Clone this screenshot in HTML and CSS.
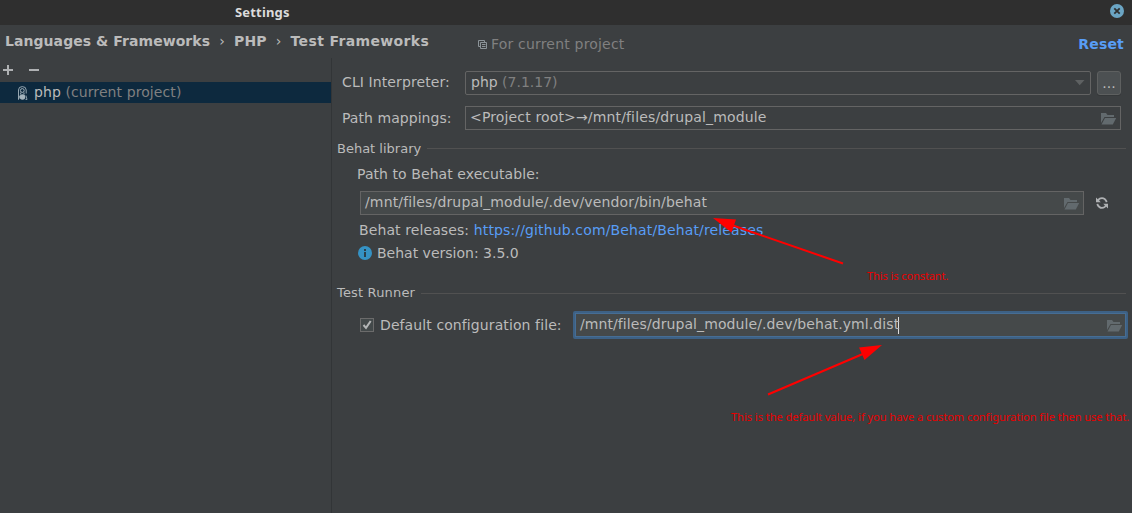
FILE: index.html
```html
<!DOCTYPE html>
<html lang="en">
<head>
<meta charset="utf-8">
<title>Settings</title>
<link rel="stylesheet" href="styles.css">
</head>
<body>
<svg class="defs" width="0" height="0">
  <symbol id="folder" viewBox="0 0 16 12">
    <path d="M0 10V0h5l1.500 2H13v2H3.500z"/>
    <path d="M4 5H15.200L11.800 11.500H.5z"/>
  </symbol>
</svg>
<div class="window">
  <header class="titlebar">
    <span class="title">Settings</span>
    <svg class="close" width="14" height="14" viewBox="0 0 14 14"><circle cx="7" cy="7" r="7" fill="#6ba5c4"/><path d="M4.300 4.300l5.400 5.400M9.700 4.300l-5.400 5.400" stroke="#2f2f2f" stroke-width="1.800"/></svg>
  </header>
  <div class="header">
    <nav class="crumbs"><span>Languages &amp; Frameworks</span><i>›</i><span>PHP</span><i>›</i><span class="current">Test Frameworks</span></nav>
    <div class="scope">
      <svg width="10" height="10" viewBox="0 0 10 10" fill="none" stroke="#8c9499"><path d="M2.500 6.500h-2v-6h6v2M2.500 2.500h6v6h-6zM4 4.500h3.500M4 6.500h3.500"/></svg>
      <span>For current project</span>
    </div>
    <a class="reset">Reset</a>
  </div>
  <div class="body">
    <aside class="sidebar">
      <div class="tools">
        <svg width="40" height="10" viewBox="0 0 40 10" fill="#afb1b3"><path d="M0 4h10v2H0zM4 0h2v10H4zM26 4h10v2H26z"/></svg>
      </div>
      <div class="item">
        <svg width="12" height="14" viewBox="0 0 12 14" fill="none" stroke="#a5b4bd"><path d="M1.500 13.500V4Q1.500.6 5.300.6T9.200 4V7.500" stroke-width=".9"/><circle cx="5.300" cy="4.500" r="1.900"/><path d="M3.700 6.500v2M7 6.500v2"/><path d="M1.500 13.500L3 9.500M9 9.500l1 4H8.500" stroke-width=".8"/><circle cx="5.500" cy="11" r="2.800" fill="#a5b4bd" stroke="none"/></svg>
        <span>php <em>(current project)</em></span>
      </div>
    </aside>
    <main class="panel">
      <div class="row cli">
        <label>CLI Interpreter:</label>
        <div class="field combo"><span>php <em>(7.1.17)</em></span><svg width="10" height="6" viewBox="0 0 10 6"><path d="M0 0h9.500L4.700 5.200z" fill="#5e6162"/></svg></div>
        <button class="more">...</button>
      </div>
      <div class="row mappings">
        <label>Path mappings:</label>
        <div class="field"><span>&lt;Project root&gt;→/mnt/files/drupal_module</span><svg class="folder" width="16" height="12"><use href="#folder"/></svg></div>
      </div>
      <div class="section first"><span>Behat library</span></div>
      <div class="path-label">Path to Behat executable:</div>
      <div class="row executable">
        <div class="field filled"><span>/mnt/files/drupal_module/.dev/vendor/bin/behat</span><svg class="folder" width="16" height="12"><use href="#folder"/></svg></div>
        <svg class="refresh" width="12" height="12" viewBox="0 0 12 12" fill="none" stroke="#afb1b3" stroke-width="1.800"><path d="M1.800 4Q3 1.100 6 1.100T10.800 5M10.200 8Q9 10.900 6 10.900T1.200 7"/><path d="M0 .5V5.200H4.800zM12 11.500V6.800H7.200z" fill="#afb1b3" stroke="none"/></svg>
      </div>
      <div class="releases">Behat releases: <a>https://github.com/Behat/Behat/releases</a></div>
      <div class="version">
        <svg width="14" height="14" viewBox="0 0 14 14"><circle cx="7" cy="7" r="7" fill="#3592c4"/><path d="M6 3h2v2H6zM6 6h2v5H6z" fill="#2b3f4a"/></svg>
        <span>Behat version: 3.5.0</span>
      </div>
      <div class="section second"><span>Test Runner</span></div>
      <div class="row config">
        <span class="check"><svg width="12" height="12" viewBox="0 0 12 12" fill="none" stroke="#b4b6b7" stroke-width="2"><path d="M2.500 6L5 8.800L9.700 2"/></svg></span>
        <label>Default configuration file:</label>
        <div class="field filled focused"><span>/mnt/files/drupal_module/.dev/behat.yml.dist</span><b class="caret"></b><svg class="folder" width="16" height="12"><use href="#folder"/></svg></div>
      </div>
    </main>
  </div>
  <svg class="arrows" width="1132" height="513" viewBox="0 0 1132 513" fill="#f00">
    <path d="M843 263.500L733 225.500" stroke="#f00" stroke-width="2"/><path d="M713 218L736 219.500L731.500 232.500z"/>
    <path d="M768 394.500L864 353.500" stroke="#f00" stroke-width="2"/><path d="M882 345L859 347.500L864.500 360z"/>
  </svg>
  <span class="note constant">This is constant.</span>
  <span class="note custom">This is the default value, if you have a custom configuration file then use that.</span>
</div>
</body>
</html>
```

FILE: styles.css
```css
* { box-sizing: border-box; }
body { margin: 0; background: #3c3f41; }
.window {
  position: relative;
  width: 1132px;
  height: 513px;
  overflow: hidden;
  display: flex;
  flex-direction: column;
  background: #3c3f41;
  color: #bbb;
  font: 14px/20px "DejaVu Sans", sans-serif;
  white-space: nowrap;
}
svg { display: block; flex: none; }
.defs { position: absolute; }
em { font-style: normal; color: #808080; }
.titlebar {
  height: 25px;
  flex: none;
  display: flex;
  justify-content: space-between;
  padding: 2px 8px 0 235px;
  background: #2f2f2f;
}
.title { font: bold 13px/20px "Noto Sans", sans-serif; letter-spacing: .18px; color: #dcdcdc; }
.close { margin-top: 2px; }
.header { height: 33px; flex: none; display: flex; padding: 6px 8px 0 5px; }
.crumbs { display: flex; width: 473px; font-weight: bold; letter-spacing: .06px; }
.crumbs i { font-style: normal; font-weight: normal; width: 24px; text-align: center; }
.crumbs .current { letter-spacing: .36px; }
.scope { display: flex; gap: 3px; padding-top: 3px; letter-spacing: .19px; color: #808080; }
.scope svg { margin-top: 6px; }
.reset { margin-left: auto; padding-top: 3px; font-weight: bold; letter-spacing: .2px; color: #589df6; }
.body { flex: 1; display: flex; }
.sidebar { width: 332px; border-right: 1px solid #323537; }
.tools { height: 24px; padding: 7px 0 0 3px; }
.item { height: 21px; display: flex; gap: 5px; padding-left: 17px; letter-spacing: .09px; background: #0d293e; }
.item svg { margin-top: 4px; }
.panel { flex: 1; display: flex; flex-direction: column; }
.row { display: flex; flex: none; }
.cli { margin: 13px 11px 0 10px; height: 24px; }
.mappings { margin: 11px 11px 0 10px; height: 24px; }
.cli label, .mappings label { width: 123px; letter-spacing: .1px; }
.cli label { padding-top: 1px; }
.mappings label { padding-top: 2px; letter-spacing: .05px; }
.field {
  flex: 1;
  height: 24px;
  display: flex;
  align-items: center;
  padding: 0 3px 0 4px;
  border: 1px solid #646464;
}
.field > span { position: relative; top: -1px; letter-spacing: .15px; }
.field > svg { margin-left: auto; }
.folder { fill: #626a6e; position: relative; top: 1px; }
.field.combo { padding: 0 5px; border-radius: 2px; }
.combo > span { letter-spacing: 0; }
.more {
  width: 24px;
  height: 24px;
  margin-left: 6px;
  padding: 0 0 1px;
  border: 1px solid #5e6060;
  border-radius: 3px;
  background: #4c5052;
  box-shadow: 0 1px 0 #35383a;
  color: #bbb;
  font: 14px/20px "DejaVu Sans", sans-serif;
}
.section {
  flex: none;
  height: 20px;
  display: flex;
  align-items: center;
  gap: 6px;
  margin: 0 6px 0 5px;
  font-size: 13px;
}
.section::after { content: ""; flex: 1; height: 1px; background: #515151; }
.first { margin-top: 8px; }
.first span { position: relative; top: 1px; }
.path-label { margin: 6px 0 0 25px; letter-spacing: .07px; }
.executable { margin: 7px 24px 0 28px; height: 24px; }
.filled { background: #45494a; }
.refresh { margin: 6px 0 0 12px; }
.releases { margin: 5px 0 0 27px; letter-spacing: .1px; }
.releases a { color: #589df6; letter-spacing: .14px; }
.version { display: flex; gap: 5px; margin: 3px 0 0 26px; }
.version svg { margin-top: 3px; }
.second { margin-top: 20px; letter-spacing: .17px; }
.config { margin: 8px 4px 0 28px; height: 28px; }
.check {
  width: 14px;
  height: 14px;
  margin: 7px 6px 0 0;
  border: 1px solid #6b6b6b;
  background: #43494a;
}
.config label { width: 193px; padding-top: 4px; letter-spacing: .1px; }
.focused { height: 28px; padding: 0 3px 0 5px; border: 2px solid #3d6185; border-radius: 2px; box-shadow: inset 0 0 0 1px #466d94; }
.focused > span { letter-spacing: .085px; }
.caret { width: 1px; height: 17px; margin-left: -1px; background: #ddd; }
.arrows { position: absolute; left: 0; top: 0; }
.note { position: absolute; font: 11px/16px "Noto Sans", sans-serif; letter-spacing: -.015px; color: #e80000; }
.constant { left: 867px; top: 268px; letter-spacing: -.08px; }
.custom { left: 731px; top: 409px; }
```
